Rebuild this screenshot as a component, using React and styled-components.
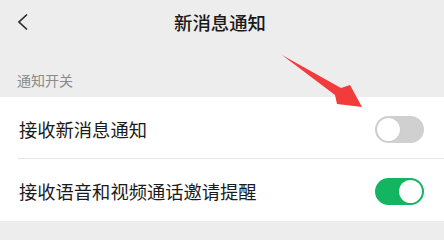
import React, { useState } from "react";
import styled, { createGlobalStyle } from "styled-components";

const Global = createGlobalStyle`
  html, body { margin: 0; padding: 0; background: #ededed; }
  body { font-family: "Noto Sans CJK SC", "Noto Sans", sans-serif; }
  * { box-sizing: border-box; }
`;

const Page = styled.div`
  position: relative;
  width: 444px;
  height: 240px;
  background: #ededed;
  overflow: hidden;
`;

const Header = styled.div`
  height: 44px;
  display: grid;
  grid-template-columns: 60px 1fr 60px;
  align-items: center;
`;

const Back = styled.div`
  display: flex;
  align-items: center;
  padding-left: 16px;
`;

const Title = styled.div`
  text-align: center;
  font-size: 18.4px;
  font-weight: 500;
  color: #1a1a1a;
  line-height: 1;
  padding-right: 4px;
`;

const SectionLabel = styled.div`
  height: 53px;
  display: flex;
  align-items: center;
  padding: 19px 0 0 17px;
  font-size: 14px;
  color: #8a8a8a;
`;

const Card = styled.div`
  background: #fff;
`;

const Row = styled.div`
  height: 62px;
  display: flex;
  align-items: center;
  justify-content: space-between;
  padding: 0 20px 0 19px;
  position: relative;
  ${(p) =>
    p.$divider &&
    `&::after {
      content: "";
      position: absolute;
      left: 18px;
      right: 0;
      bottom: 0;
      height: 1px;
      background: #e6e6e6;
    }`}
`;

const Label = styled.div`
  font-size: 18.3px;
  color: #1b1b1b;
  line-height: 1;
  padding-top: 3px;
`;

const Switch = styled.button`
  width: 49px;
  height: 27px;
  border-radius: 14px;
  border: none;
  padding: 2px;
  display: flex;
  justify-content: ${(p) => (p.$on ? "flex-end" : "flex-start")};
  background: ${(p) => (p.$on ? "#14b560" : "#d0d0d0")};
  cursor: pointer;
  margin-top: 2px;
`;

const Knob = styled.span`
  width: 23px;
  height: 23px;
  border-radius: 50%;
  background: #fff;
  box-shadow: 0 0 1px rgba(0, 0, 0, 0.15);
`;

const Arrow = styled.svg`
  position: absolute;
  left: 0;
  top: 0;
  pointer-events: none;
`;

export default function App() {
  const [a, setA] = useState(false);
  const [b, setB] = useState(true);
  return (
    <Page>
      <Global />
      <Header>
        <Back>
          <svg width="14" height="18" viewBox="0 0 14 18">
            <path d="M11 1.5 L3 9 L11 16.5" fill="none" stroke="#2a2a2a" strokeWidth="1.7" />
          </svg>
        </Back>
        <Title>新消息通知</Title>
        <div />
      </Header>
      <SectionLabel>通知开关</SectionLabel>
      <Card>
        <Row $divider>
          <Label>接收新消息通知</Label>
          <Switch $on={a} onClick={() => setA(!a)}>
            <Knob />
          </Switch>
        </Row>
        <Row>
          <Label>接收语音和视频通话邀请提醒</Label>
          <Switch $on={b} onClick={() => setB(!b)}>
            <Knob />
          </Switch>
        </Row>
      </Card>
      <Arrow width="444" height="240" viewBox="0 0 444 240">
        <polygon
          points="282,55 341,88 350,85 362,107 337,104 335,95"
          fill="#f23b3b"
        />
      </Arrow>
    </Page>
  );
}
